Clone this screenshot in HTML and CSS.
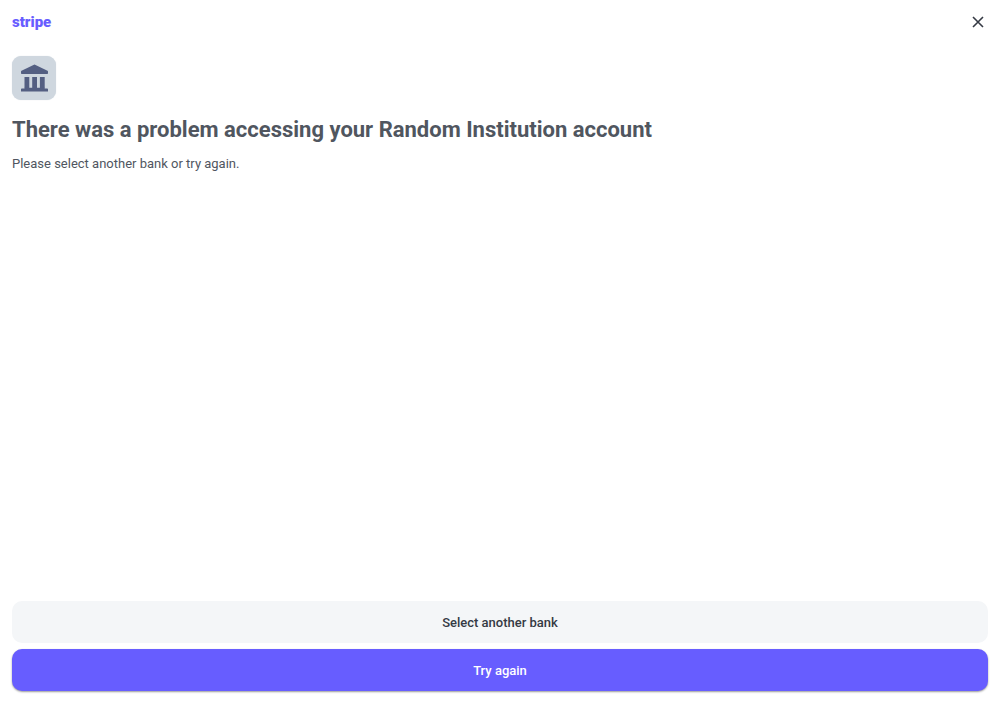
FILE: index.html
```html
<!DOCTYPE html>
<html lang="en">
<head>
<meta charset="utf-8">
<meta name="viewport" content="width=device-width, initial-scale=1">
<title>Account connection problem</title>
<link rel="stylesheet" href="styles.css">
</head>
<body>
<div class="screen">
  <header class="topbar">
    <span class="logo">stripe</span>
    <button class="close" type="button" aria-label="Close">
      <svg width="12" height="12" viewBox="0 0 12 12" fill="none" stroke="currentColor" stroke-width="1.6" aria-hidden="true"><path d="M1 1l10 10M11 1L1 11"/></svg>
    </button>
  </header>
  <main class="content">
    <div class="bank-icon">
      <svg width="28" height="28" viewBox="0 0 28 28" fill="currentColor" aria-hidden="true">
        <path d="M14.500 .5L27.500 6.800Q28 7.100 28 7.600v1.700q0 .8-.8.8H1.800q-.8 0-.8-.8V7.600q0-.5.5-.8z"/>
        <path d="M4.500 13h4.800v11H4.500zM12.200 13h4.800v11h-4.800zM19.900 13h4.800v11h-4.800z"/>
        <path d="M4.500 23.800h20.200v.7h2.500q.8 0 .8.800v2.200H1v-2.200q0-.8.8-.8h2.700z"/>
      </svg>
    </div>
    <h1 class="title">There was a problem accessing your Random Institution account</h1>
    <p class="message">Please select another bank or try again.</p>
  </main>
  <footer class="actions">
    <button class="button secondary" type="button">Select another bank</button>
    <button class="button primary" type="button">Try again</button>
  </footer>
</div>
</body>
</html>
```
FILE: styles.css
```css
* {
  box-sizing: border-box;
}

body {
  margin: 0;
  background: #fff;
  color: #50565f;
  font-family: Roboto, "Liberation Sans", sans-serif;
}

.screen {
  display: flex;
  flex-direction: column;
  min-height: 100vh;
  padding: 0 12px 12px;
}

.topbar {
  display: flex;
  align-items: center;
  justify-content: space-between;
  height: 44px;
}

.logo {
  color: #675dff;
  font-size: 15px;
  font-weight: 900;
  line-height: 20px;
}

.close {
  display: flex;
  padding: 4px;
  border: 0;
  background: none;
  color: #353a44;
}

.content {
  flex: 1;
  padding-top: 12px;
}

.bank-icon {
  display: flex;
  align-items: center;
  justify-content: center;
  width: 44px;
  height: 44px;
  border-radius: 9px;
  background: #cfd7df;
  color: #545f82;
  box-shadow: 0 0 1px #cfd7df;
}

.title {
  margin: 14px 0 10px;
  font-size: 22px;
  font-weight: 700;
  line-height: 32px;
}

.message {
  margin: 0;
  font-size: 13px;
  line-height: 16px;
}

.actions {
  display: flex;
  flex-direction: column;
  gap: 6px;
}

.button {
  height: 42px;
  border: 0;
  border-radius: 10px;
  font-family: inherit;
  font-size: 13px;
  font-weight: 500;
}

.secondary {
  background: #f4f6f8;
  color: #353a44;
}

.primary {
  background: #675dff;
  color: #fff;
  box-shadow: 0 1px 2px rgba(0, 0, 0, 0.4);
}
```
